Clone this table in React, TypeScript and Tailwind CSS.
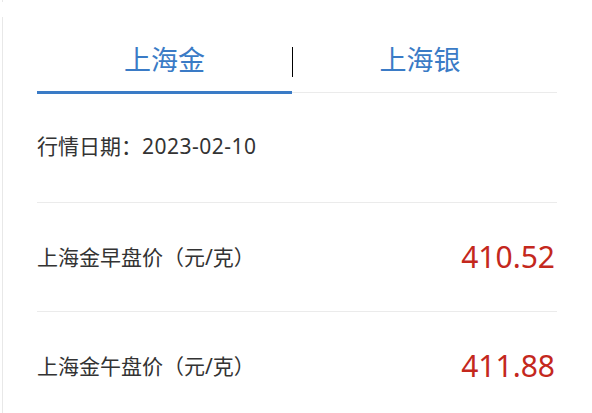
import React from "react";

const font = { fontFamily: '"Noto Sans", "Noto Sans CJK SC", sans-serif' };

function Row({ label, value }: { label: string; value: string }) {
  return (
    <div className="flex h-[109px] items-center justify-between border-b border-[#ebebeb]">
      <span className="text-[21px] leading-[30px] text-[#333333]">{label}</span>
      <span className="text-[30px] leading-[40px] text-[#c4281d] pr-[2px]">{value}</span>
    </div>
  );
}

export default function App() {
  return (
    <div className="w-[592px] h-[413px] bg-white overflow-hidden" style={font}>
      <div className="ml-[2px] h-[2px] border-l border-[#e8e8e8]" />
      <div className="ml-[2px] mt-[15px] h-[400px] border-l border-[#e8e8e8] pl-[34px] pr-[35px]">
        <div className="flex items-start">
          <div className="w-[255px] h-[77px] border-b-[3px] border-[#3a7bc6] flex justify-center pt-[28px]">
            <span className="text-[27px] leading-[30px] text-[#3a7bc6]">上海金</span>
          </div>
          <div className="w-px h-[76px] border-b border-[#ebebeb] flex flex-col">
            <div className="mt-[30px] h-[30px] w-px bg-black" />
          </div>
          <div className="flex-1 h-[76px] border-b border-[#ebebeb] flex justify-center pt-[28px] pr-[10px]">
            <span className="text-[27px] leading-[30px] text-[#3a7bc6]">上海银</span>
          </div>
        </div>
        <div className="flex h-[109px] items-center border-b border-[#ebebeb] pb-[4px]">
          <span className="text-[21px] leading-[30px] text-[#333333]">
            行情日期：<span className="tracking-[0.5px]">2023-02-10</span>
          </span>
        </div>
        <Row label="上海金早盘价（元/克）" value="410.52" />
        <Row label="上海金午盘价（元/克）" value="411.88" />
      </div>
    </div>
  );
}
